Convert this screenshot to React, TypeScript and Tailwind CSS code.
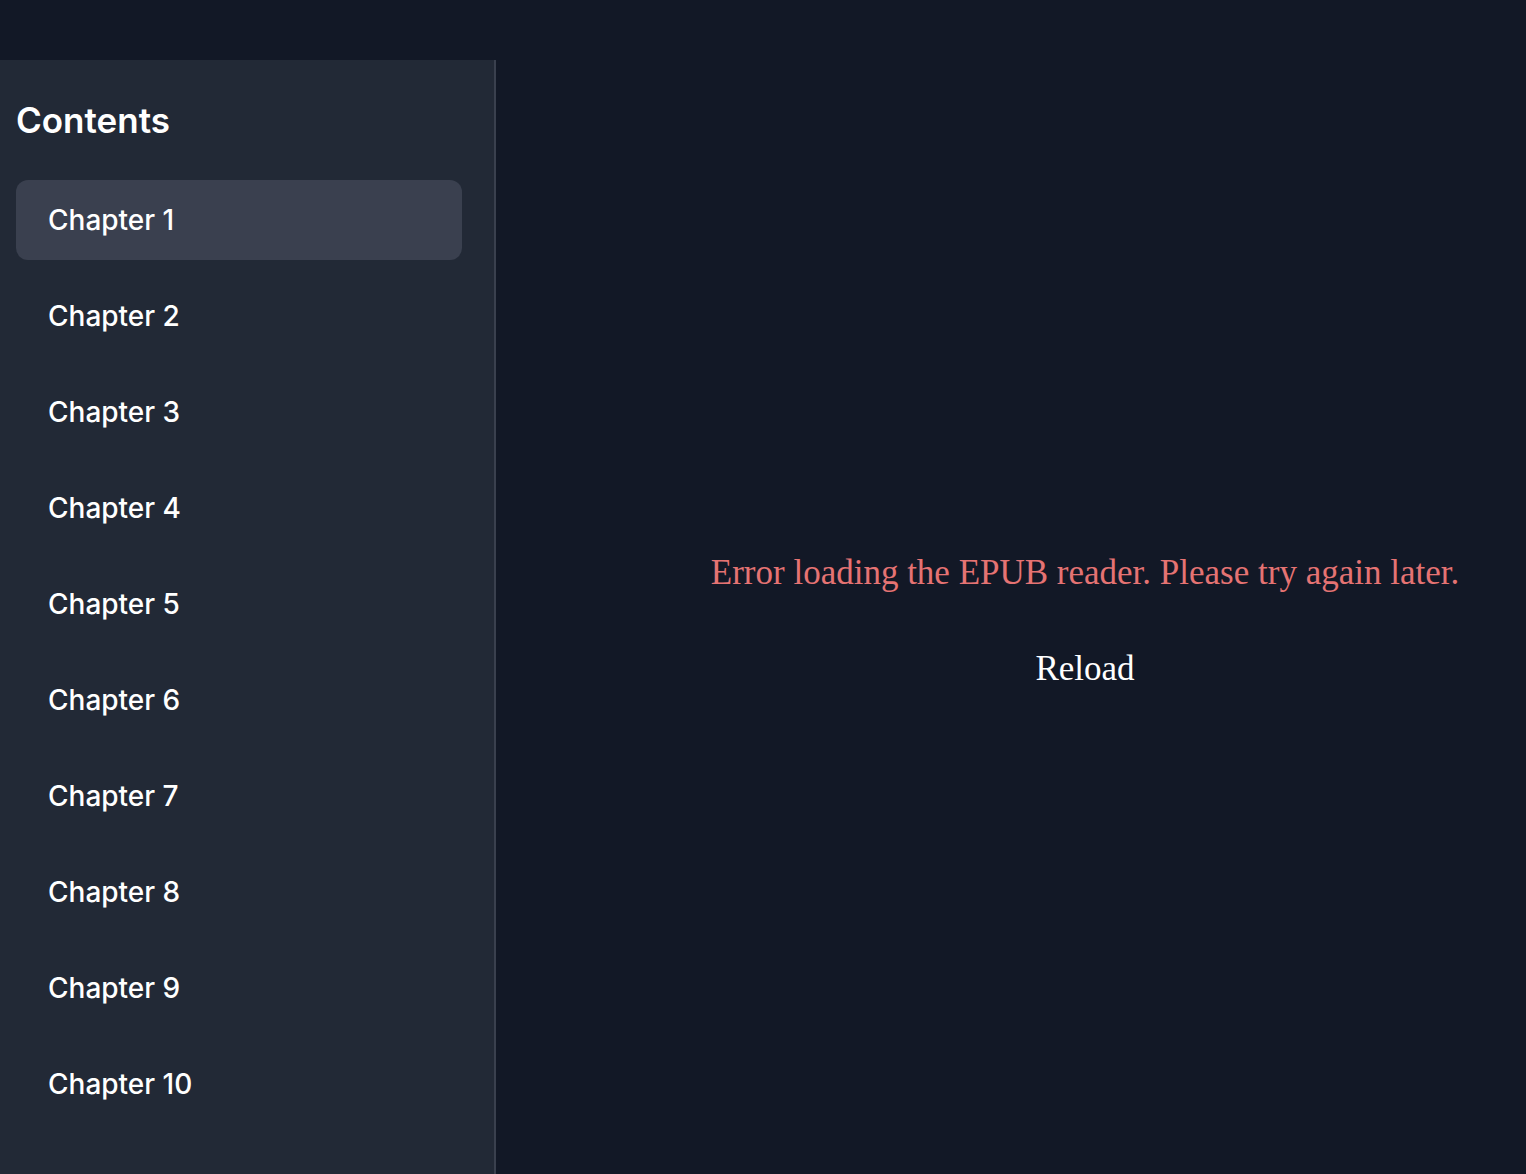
const chapters = Array.from({ length: 10 }, (_, i) => `Chapter ${i + 1}`);

export default function App() {
  return (
    <div className="flex min-h-screen flex-col bg-[#121826] font-['Inter',sans-serif] text-white">
      <header className="h-15 shrink-0" />
      <div className="flex flex-1">
        <aside className="w-124 shrink-0 border-r-2 border-[#3a404e] bg-[#222936] pt-10 pr-8 pl-4">
          <h2 className="mb-10 text-[35px] leading-10 font-semibold">Contents</h2>
          <nav aria-label="Contents">
            <ul className="flex flex-col gap-4">
              {chapters.map((chapter, i) => (
                <li key={chapter}>
                  <button
                    type="button"
                    aria-current={i === 0 ? "true" : undefined}
                    className={`h-20 w-full rounded-xl px-8 text-left text-[28px] leading-10 font-medium ${
                      i === 0 ? "bg-[#3a404f]" : ""
                    }`}
                  >
                    {chapter}
                  </button>
                </li>
              ))}
            </ul>
          </nav>
        </aside>
        <main className="flex flex-1 flex-col items-center justify-center gap-10 pt-4 pl-37 font-['Liberation_Serif',serif] text-[35px] leading-12">
          <p className="text-center text-[#e57373]">
            Error loading the EPUB reader. Please try again later.
          </p>
          <button type="button" className="px-8 py-2">
            Reload
          </button>
        </main>
      </div>
    </div>
  );
}
